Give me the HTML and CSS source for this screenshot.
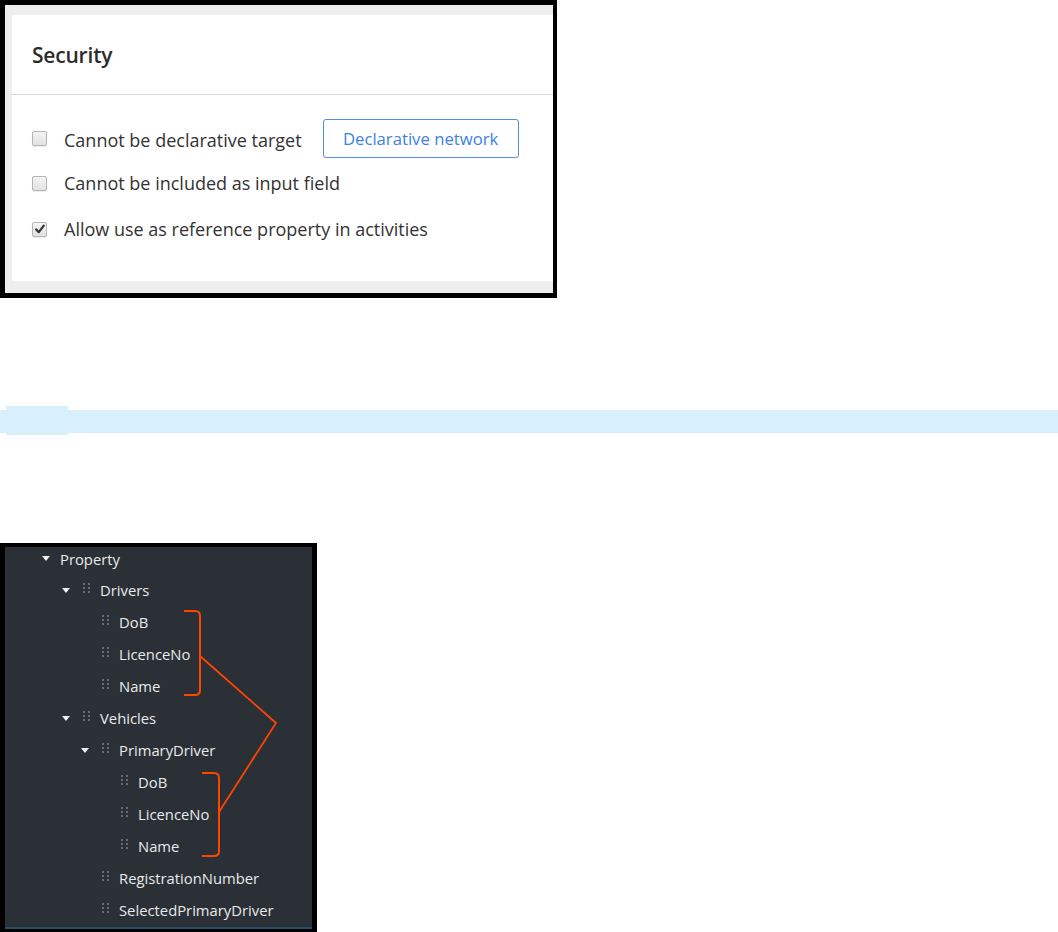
FILE: index.html
```html
<!DOCTYPE html>
<html>
<head>
<meta charset="utf-8">
<link rel="stylesheet" href="styles.css">
</head>
<body>
<div class="shot shot-security">
  <div class="grey">
    <div class="panel">
      <div class="panel-head"><h2 class="title">Security</h2></div>
      <div class="panel-body">
        <div class="opt opt-1">
          <span class="cb"></span>
          <span class="opt-label">Cannot be declarative target</span>
          <button class="btn">Declarative network</button>
        </div>
        <div class="opt opt-2">
          <span class="cb"></span>
          <span class="opt-label">Cannot be included as input field</span>
        </div>
        <div class="opt opt-3">
          <span class="cb checked"><svg viewBox="0 0 14 14" width="14" height="14"><path d="M3.2 7.4 L5.8 10.2 L10.8 3.6" fill="none" stroke="#333" stroke-width="2.2" stroke-linecap="round" stroke-linejoin="round"/></svg></span>
          <span class="opt-label">Allow use as reference property in activities</span>
        </div>
      </div>
    </div>
  </div>
</div>

<div class="bar"><span class="bar-tab"></span></div>

<div class="shot shot-tree">
  <div class="tree">
    <div class="row lvl0"><span class="caret-slot root"><i class="caret"></i></span><span class="label">Property</span></div>
    <div class="row lvl1"><span class="caret-slot"><i class="caret"></i></span><span class="grip-slot"><i class="grip"></i></span><span class="label">Drivers</span></div>
    <div class="row lvl2 leaf"><span class="grip-slot"><i class="grip"></i></span><span class="label">DoB</span></div>
    <div class="row lvl2 leaf"><span class="grip-slot"><i class="grip"></i></span><span class="label">LicenceNo</span></div>
    <div class="row lvl2 leaf"><span class="grip-slot"><i class="grip"></i></span><span class="label">Name</span></div>
    <div class="row lvl1"><span class="caret-slot"><i class="caret"></i></span><span class="grip-slot"><i class="grip"></i></span><span class="label">Vehicles</span></div>
    <div class="row lvl2"><span class="caret-slot"><i class="caret"></i></span><span class="grip-slot"><i class="grip"></i></span><span class="label">PrimaryDriver</span></div>
    <div class="row lvl3 leaf"><span class="grip-slot"><i class="grip"></i></span><span class="label">DoB</span></div>
    <div class="row lvl3 leaf"><span class="grip-slot"><i class="grip"></i></span><span class="label">LicenceNo</span></div>
    <div class="row lvl3 leaf"><span class="grip-slot"><i class="grip"></i></span><span class="label">Name</span></div>
    <div class="row lvl2 leaf"><span class="grip-slot"><i class="grip"></i></span><span class="label">RegistrationNumber</span></div>
    <div class="row lvl2 leaf"><span class="grip-slot"><i class="grip"></i></span><span class="label">SelectedPrimaryDriver</span></div>
  </div>
  <svg class="annot" width="317" height="389" viewBox="0 0 317 389">
    <path d="M184 68 H195 Q200 68 200 73 V147 Q200 152 195 152 H184" fill="none" stroke="#ff4500" stroke-width="2"/>
    <path d="M202 230 H214 Q219 230 219 235 V308 Q219 313 214 313 H202" fill="none" stroke="#ff4500" stroke-width="2"/>
    <path d="M200 113 L276 180 L219 269" fill="none" stroke="#ff4500" stroke-width="1.8"/>
  </svg>
</div>
</body>
</html>
```

FILE: styles.css
```css
html, body {
  margin: 0;
  padding: 0;
  background: #ffffff;
  overflow: hidden;
}
body {
  width: 1058px;
  height: 932px;
  font-family: "Open Sans", "Liberation Sans", sans-serif;
}

.shot {
  background: #000;
  box-sizing: border-box;
}

/* ---------- Security screenshot ---------- */
.shot-security {
  width: 557px;
  height: 298px;
  padding: 5px 4px 5px 5px;
}
.grey {
  background: #eeeeee;
  height: 100%;
  box-sizing: border-box;
  padding: 10px 0 12px 7px;
}
.panel {
  background: #ffffff;
  height: 100%;
  border-radius: 2px 0 0 2px;
}
.panel-head {
  height: 80px;
  box-sizing: border-box;
  border-bottom: 1.5px solid #d6d6d6;
  display: flex;
  align-items: center;
  padding-left: 20px;
}
.title {
  margin: 0;
  font-size: 21px;
  font-weight: 600;
  color: #2c2c2c;
  letter-spacing: -0.2px;
}
.panel-body {
  padding: 24px 0 0 20px;
}
.opt {
  display: flex;
  align-items: center;
  color: #333;
  font-size: 18px;
}
.opt-1 { height: 39px; }
.opt-2 { height: 24px; margin-top: 13px; }
.opt-3 { height: 24px; margin-top: 22px; }
.opt-1 .opt-label { padding-top: 3px; }
.cb {
  width: 13px;
  height: 13px;
  border: 1px solid #b4b4b4;
  border-radius: 2px;
  background: linear-gradient(#f4f4f4, #e2e2e2);
  box-shadow: 0 1px 1px rgba(0,0,0,0.08);
  margin-right: 17px;
  flex: none;
  position: relative;
}
.cb svg {
  position: absolute;
  left: 0;
  top: -1px;
}
.opt-label {
  white-space: nowrap;
}
.btn {
  margin-left: 21px;
  height: 39px;
  width: 196px;
  border: 1.5px solid #4f8ef0;
  border-radius: 3px;
  background: #fff;
  color: #3d7fe6;
  font-family: "Open Sans", "Liberation Sans", sans-serif;
  font-size: 16.7px;
  padding: 0;
}

/* ---------- light blue bar ---------- */
.bar {
  margin-top: 112px;
  height: 23px;
  background: #d8f0fc;
  display: flex;
}
.bar-tab {
  display: block;
  width: 62px;
  height: 29px;
  margin: -4px 0 -2px 6px;
  background: #d8f0fc;
}

/* ---------- tree screenshot ---------- */
.shot-tree {
  margin-top: 110px;
  width: 317px;
  height: 389px;
  padding: 4px 5px 3px 5px;
  position: relative;
}
.tree {
  background: #2a3035;
  height: 100%;
  box-sizing: border-box;
  border-bottom: 2px solid #24506b;
  overflow: hidden;
}
.row {
  height: 32px;
  display: flex;
  align-items: center;
  color: #e8eaec;
  font-size: 14.8px;
}
.row:first-child {
  height: 23px;
  padding-bottom: 4px;
}
.lvl0 { padding-left: 37px; }
.lvl1 { padding-left: 57px; }
.lvl2 { padding-left: 76px; }
.lvl3 { padding-left: 95px; }
.leaf.lvl2 { padding-left: 97px; }
.leaf.lvl3 { padding-left: 116px; }

.caret-slot {
  width: 21px;
  flex: none;
  display: flex;
  align-items: center;
}
.caret-slot.root { width: 18px; }
.caret {
  display: block;
  width: 0;
  height: 0;
  border-left: 4px solid transparent;
  border-right: 4px solid transparent;
  border-top: 5px solid #f0f0f0;
}
.grip-slot {
  width: 17px;
  flex: none;
  display: flex;
  align-items: center;
  height: 32px;
}
.grip {
  display: block;
  width: 7px;
  height: 10px;
  margin-top: -5px;
  background-image: linear-gradient(90deg, #666d73 2px, transparent 2px, transparent 5px, #666d73 5px);
  -webkit-mask-image: linear-gradient(#000 2px, transparent 2px, transparent 4px, #000 4px, #000 6px, transparent 6px, transparent 8px, #000 8px);
  mask-image: linear-gradient(#000 2px, transparent 2px, transparent 4px, #000 4px, #000 6px, transparent 6px, transparent 8px, #000 8px);
}
.label {
  white-space: nowrap;
}
.annot {
  position: absolute;
  left: 0;
  top: 0;
  pointer-events: none;
}
```
